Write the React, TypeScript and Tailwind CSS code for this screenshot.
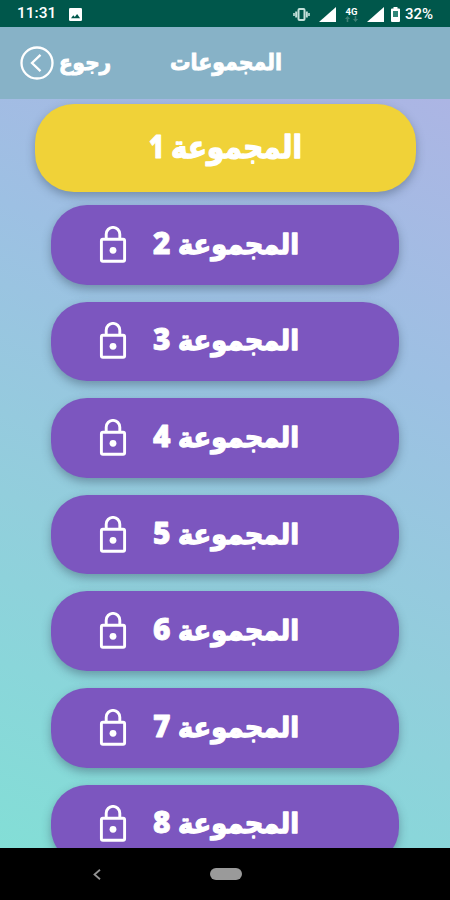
const groups = [2, 3, 4, 5, 6, 7, 8];

function LockIcon() {
  return (
    <svg width="28" height="38" viewBox="0 0 28 38" fill="none" stroke="white" strokeWidth="2.9">
      <rect x="2.4" y="13.2" width="23.2" height="22" rx="1.5" />
      <path d="M7.2 13V8.200a6.800 6.800 0 0 1 13.600 0V13" />
      <circle cx="14" cy="24.300" r="3.400" fill="white" stroke="none" />
    </svg>
  );
}

function StatusBar() {
  return (
    <div className="flex h-[27px] shrink-0 items-center bg-[#00574b] pt-[1px] pr-[15px] pl-[17px] font-[Roboto,sans-serif] text-[15.500px] font-medium text-white">
      <span className="w-[38px]">11:31</span>
      <svg className="ml-[14px]" width="13" height="13" viewBox="0 0 13 13">
        <rect width="13" height="13" rx="1.3" fill="white" />
        <path d="M2 10.300 4.300 7.300l1.500 1.800 2.300-3 3 4.200z" fill="#00574b" />
      </svg>
      <div className="ml-auto flex items-center">
        <svg width="17" height="13" viewBox="0 0 17 13" fill="none" stroke="#c4e0da">
          <rect x="5.500" y="1" width="6" height="11" rx="1" strokeWidth="2" />
          <path d="M3.200 3.500v6M13.800 3.500v6" strokeWidth="2" />
          <path d="M1 5v3M16 5v3" strokeWidth="1.600" />
        </svg>
        <svg className="ml-[9px]" width="17" height="15" viewBox="0 0 17 15">
          <path d="M0 15 17 0v15z" fill="white" />
        </svg>
        <div className="ml-[8px] flex w-[15px] flex-col items-center">
          <span className="text-[9.500px] leading-[9px] font-bold">4G</span>
          <svg width="13" height="6" viewBox="0 0 13 6" fill="#3f8075">
            <path d="M0 3 2.500 0 5 3H3.300v3H1.700V3zM8 3l2.500 3L13 3h-1.700V0H9.700v3z" />
          </svg>
        </div>
        <svg className="ml-[8px]" width="17" height="15" viewBox="0 0 17 15">
          <path d="M0 15 17 0v15z" fill="white" />
        </svg>
        <svg className="ml-[7px]" width="9" height="15" viewBox="0 0 9 15">
          <path d="M2.500 0h4v1.500H8a1 1 0 0 1 1 1V14a1 1 0 0 1-1 1H1a1 1 0 0 1-1-1V2.500a1 1 0 0 1 1-1h1.500z" fill="white" />
          <rect x="2" y="4" width="5" height="6" fill="#2f8577" />
        </svg>
        <span className="ml-[5px] w-[30px] text-[15px]">32%</span>
      </div>
    </div>
  );
}

function AppBar() {
  return (
    <header className="flex h-[72px] shrink-0 items-center bg-[#87b2c7] pl-[20px] text-white">
      <svg width="34" height="34" viewBox="0 0 34 34" fill="none" stroke="white" strokeWidth="2.300">
        <circle cx="17" cy="17" r="15.500" />
        <path d="M20.500 8.800 12 17l8.500 8.200" />
      </svg>
      <svg className="ml-[5px]" width="54" height="40" overflow="visible">
        <text x="0" y="27" direction="rtl" textAnchor="end" textLength="52" lengthAdjust="spacingAndGlyphs" fill="white" stroke="white" strokeWidth="1" className="text-[21px] font-bold">رجوع</text>
      </svg>
      <svg className="ml-[57px]" width="112" height="40" overflow="visible">
        <text x="0" y="27" direction="rtl" textAnchor="end" textLength="112" lengthAdjust="spacingAndGlyphs" fill="white" stroke="white" strokeWidth="0.9" className="text-[23px] font-bold">المجموعات</text>
      </svg>
    </header>
  );
}

interface GroupLabelProps {
  number: number;
  large?: boolean;
}

function GroupLabel({ number, large = false }: GroupLabelProps) {
  const wordWidth = large ? 131 : 121;
  const wordX = large ? 21 : 25;
  return (
    <svg width={wordX + wordWidth} height="44" overflow="visible" fill="white" stroke="white" strokeLinejoin="round">
      <text x={large ? -1 : 0} y="31" textLength={large ? 15 : 17.5} lengthAdjust="spacingAndGlyphs" strokeWidth="0.8" className={large ? "font-['Open_Sans',sans-serif] text-[32px] font-extrabold" : "font-['Open_Sans',sans-serif] text-[30px] font-extrabold"}>
        {number}
      </text>
      <text x={wordX} y="31" direction="rtl" textAnchor="end" textLength={wordWidth} lengthAdjust="spacingAndGlyphs" strokeWidth="1.3" className={large ? "text-[31px] font-bold" : "text-[28px] font-bold"}>
        المجموعة
      </text>
    </svg>
  );
}

export default function App() {
  return (
    <div className="flex h-[900px] w-[450px] flex-col overflow-hidden bg-black font-['DejaVu_Sans',sans-serif]">
      <StatusBar />
      <AppBar />
      <main className="flex h-[749px] shrink-0 flex-col items-center overflow-hidden bg-[linear-gradient(203deg,#acb5e4_0%,#9dc0e3_31%,#92cedc_62%,#8ad6da_80%,#83ded6_100%)] pt-[5px]">
        <button type="button" className="flex h-[88px] w-[381px] shrink-0 items-center rounded-[39px] bg-[#f0d238] pt-[1px] pl-[115px] shadow-[0_4px_10px_rgba(50,70,90,0.4)]">
          <GroupLabel number={1} large />
        </button>
        <div className="mt-[13px] flex flex-col gap-[17px]">
          {groups.map((number) => (
            <button key={number} type="button" className="flex h-[79.600px] w-[348px] shrink-0 items-center rounded-[36px] bg-[#7c56bf] pl-[48px] shadow-[0_4px_10px_rgba(50,70,90,0.42)]">
              <LockIcon />
              <div className="ml-[26px]">
                <GroupLabel number={number} />
              </div>
            </button>
          ))}
        </div>
      </main>
      <nav className="flex h-[52px] items-center bg-black">
        <svg className="ml-[93px]" width="8" height="11" viewBox="0 0 8 11" fill="none" stroke="#929292" strokeWidth="1.800">
          <path d="M7 .7 1.500 5.500 7 10.300" />
        </svg>
        <div className="ml-[109px] h-[12px] w-[32px] rounded-full bg-[#9a9a9a]" />
      </nav>
    </div>
  );
}
